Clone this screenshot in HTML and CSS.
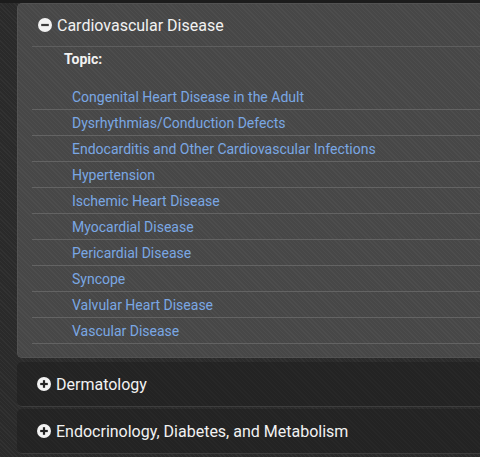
FILE: index.html
```html
<!DOCTYPE html>
<html>
<head>
<meta charset="utf-8">
<link rel="stylesheet" href="styles.css">
</head>
<body>
<div class="topbar"></div>
<div class="accordion">
  <section class="panel open">
    <div class="panel-head">
      <svg class="icon" viewBox="0 0 14 14" width="14" height="14"><circle cx="7" cy="7" r="7" fill="#f2f2f2"/><rect x="3.2" y="5.9" width="7.6" height="2.2" fill="#3c3c3c"/></svg>
      <span class="title">Cardiovascular Disease</span>
    </div>
    <div class="panel-body">
      <div class="topic">Topic:</div>
      <ul class="links">
        <li><a href="#">Congenital Heart Disease in the Adult</a></li>
        <li><a href="#">Dysrhythmias/Conduction Defects</a></li>
        <li><a href="#">Endocarditis and Other Cardiovascular Infections</a></li>
        <li><a href="#">Hypertension</a></li>
        <li><a href="#">Ischemic Heart Disease</a></li>
        <li><a href="#">Myocardial Disease</a></li>
        <li><a href="#">Pericardial Disease</a></li>
        <li><a href="#">Syncope</a></li>
        <li><a href="#">Valvular Heart Disease</a></li>
        <li><a href="#">Vascular Disease</a></li>
      </ul>
    </div>
  </section>
  <section class="panel closed">
    <div class="panel-head">
      <svg class="icon" viewBox="0 0 14 14" width="14" height="14"><circle cx="7" cy="7" r="7" fill="#f2f2f2"/><rect x="3.2" y="5.9" width="7.6" height="2.2" fill="#222"/><rect x="5.9" y="3.2" width="2.2" height="7.6" fill="#222"/></svg>
      <span class="title">Dermatology</span>
    </div>
  </section>
  <section class="panel closed">
    <div class="panel-head">
      <svg class="icon" viewBox="0 0 14 14" width="14" height="14"><circle cx="7" cy="7" r="7" fill="#f2f2f2"/><rect x="3.2" y="5.9" width="7.6" height="2.2" fill="#222"/><rect x="5.9" y="3.2" width="2.2" height="7.6" fill="#222"/></svg>
      <span class="title">Endocrinology, Diabetes, and Metabolism</span>
    </div>
  </section>
</div>
</body>
</html>
```
FILE: styles.css
```css
html, body {
  margin: 0;
  padding: 0;
}
body {
  width: 480px;
  height: 457px;
  overflow: hidden;
  font-family: Roboto, "Liberation Sans", sans-serif;
  background-color: #2a2a2a;
  background-image: repeating-linear-gradient(45deg, rgba(255,255,255,0.035) 0 1px, transparent 1px 3px);
}
.topbar {
  height: 3px;
  background: #1c1c1c;
}
.accordion {
  padding-left: 17px;
}
.panel {
  border-radius: 5px 0 0 5px;
}
.panel.open {
  background-color: #474747;
  background-image: repeating-linear-gradient(45deg, rgba(255,255,255,0.035) 0 1px, transparent 1px 3px);
  border: 1px solid #525252;
  border-right: none;
  height: 353px;
}
.panel-head {
  display: flex;
  align-items: center;
  height: 44px;
  padding-left: 20px;
  gap: 5px;
  color: #f2f2f2;
  font-size: 16px;
}
.panel.open .panel-head {
  height: 42px;
  margin-left: 14px;
  padding-left: 6px;
  border-bottom: 1px solid #5e5e5e;
}
.icon {
  flex: none;
  display: block;
}
.panel-body {
  padding-top: 2px;
}
.topic {
  font-size: 14px;
  font-weight: bold;
  color: #f2f2f2;
  margin-left: 46px;
  line-height: 20px;
  height: 35px;
}
.links {
  list-style: none;
  margin: 0 0 0 14px;
  padding: 0;
}
.links li {
  height: 25px;
  border-bottom: 1px solid #636363;
  display: flex;
  align-items: center;
  padding-left: 40px;
  font-size: 14px;
}
.links a {
  color: #7aa7e4;
  text-decoration: none;
}
.panel.closed {
  background-color: #232323;
  background-image: repeating-linear-gradient(45deg, rgba(255,255,255,0.02) 0 1px, transparent 1px 3px);
  border-bottom: 1px solid #3d3d3d;
  margin-top: 4px;
}
.panel.closed + .panel.closed {
  margin-top: 2px;
}
.panel.closed .panel-head {
  height: 44px;
}
```
